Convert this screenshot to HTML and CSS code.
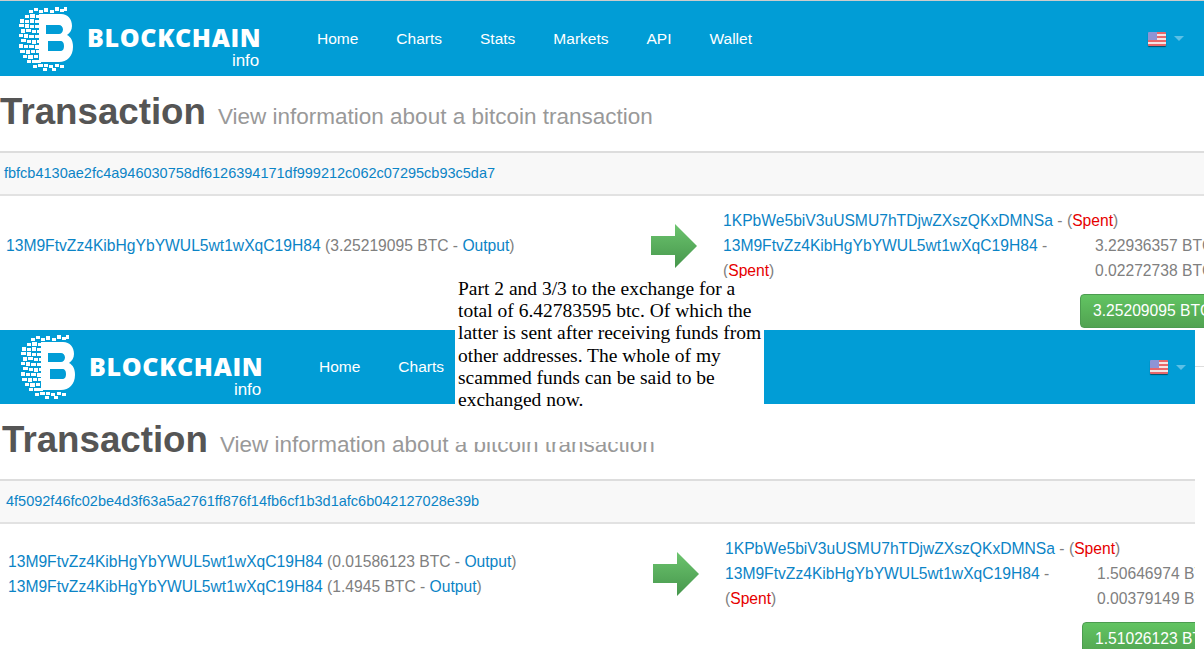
FILE: index.html
```html
<!DOCTYPE html>
<html lang="en">
  <head>
    <meta charset="UTF-8" />
    <title>Transaction</title>
    <link rel="stylesheet" href="styles.css">
  </head>
  <body>
    <svg class="defs" width="0" height="0">
      <defs>
        <g id="logoB" fill="#fff">
          <path fill-rule="evenodd" d="M20 7h22c7 0 11 5 11 12 0 4-2 7-5 9 4 2 6 6 6 12 0 9-6 15-14 15H20zM27 18v9h13c2 0 4-2 4-4.500s-2-4.500-4-4.500zM29 34v10h12c3 0 4-2 4-5s-1-5-4-5z" />
          <path d="M10 3h4v3h-4zM15 1h4v3h-4zM20 3h4v3h-4zM25 1h4v4h-4zM31 3h4v3h-4zM36 0h4v4h-4zM41 2h4v3h-4zM45 0h3v4h-3zM6 8h4v3H6zM11 7h5v4h-5zM17 8h4v3h-4zM1 12h4v4H1zM6 13h4v3H6zM11 12h4v4h-4zM16 13h5v3h-5zM0 17h5v3H0zM6 17h4v4H6zM11 18h4v3h-4zM16 18h5v3h-5zM2 22h4v4H2zM7 22h5v3H7zM13 23h4v3h-4zM18 23h3v3h-3zM0 27h4v3H0zM5 27h4v4H5zM10 28h5v3h-5zM16 28h5v3h-5zM2 32h5v3H2zM8 33h4v3H8zM13 33h4v4h-4zM18 33h3v3h-3zM0 37h4v4H0zM5 38h4v3H5zM10 38h5v3h-5zM16 38h5v4h-5zM1 43h5v3H1zM7 43h4v4H7zM12 43h4v3h-4zM17 43h4v3h-4zM4 48h4v3H4zM9 48h5v4H9zM15 48h4v3h-4zM8 53h4v3H8zM13 53h5v3h-5zM18 53h4v3h-4zM14 58h4v3h-4zM19 57h5v3h-5zM25 57h4v3h-4zM30 58h4v3h-4zM36 57h4v3h-4zM41 58h4v3h-4zM24 61h4v3h-4zM33 61h4v3h-4z" />
        </g>
        <linearGradient id="arrowFill" x1="0" y1="0" x2="0" y2="1">
          <stop offset="0" stop-color="#6cc46e" />
          <stop offset="1" stop-color="#46964c" />
        </linearGradient>
      </defs>
    </svg>

    <section class="shot">
      <nav class="navbar">
        <a class="brand">
          <svg class="brand-mark" width="54" height="64" viewBox="0 0 54 64"><use href="#logoB" /></svg>
          <span class="brand-text"><b>BLOCKCHAIN</b><small>info</small></span>
        </a>
        <ul class="nav-links">
          <li>Home</li>
          <li>Charts</li>
          <li>Stats</li>
          <li>Markets</li>
          <li>API</li>
          <li>Wallet</li>
        </ul>
        <div class="locale">
          <span class="flag"></span>
          <span class="caret"></span>
        </div>
      </nav>
      <div class="page-header">
        <h1>Transaction</h1>
        <span class="lead">View information about a bitcoin transaction</span>
      </div>
      <div class="tx-hash"><a>fbfcb4130ae2fc4a946030758df6126394171df999212c062c07295cb93c5da7</a></div>
      <div class="tx-row">
        <div class="tx-in">
          <p><a>13M9FtvZz4KibHgYbYWUL5wt1wXqC19H84</a> (3.25219095 BTC - <a>Output</a>)</p>
        </div>
        <svg class="arrow" width="46" height="44" viewBox="0 0 46 44"><path d="M0 12h24V0l22 22-22 22V31H0z" fill="url(#arrowFill)" /></svg>
        <div class="tx-out">
          <p><a>1KPbWe5biV3uUSMU7hTDjwZXszQKxDMNSa</a> - (<em>Spent</em>)</p>
          <p><a>13M9FtvZz4KibHgYbYWUL5wt1wXqC19H84</a> -<br>(<em>Spent</em>)</p>
        </div>
        <div class="tx-amounts">
          <p>3.22936357 BTC</p>
          <p>0.02272738 BTC</p>
        </div>
      </div>
      <div class="tx-total"><button>3.25209095 BTC</button></div>
    </section>

    <section class="shot shot-second">
      <nav class="navbar">
        <a class="brand">
          <svg class="brand-mark" width="54" height="64" viewBox="0 0 54 64"><use href="#logoB" /></svg>
          <span class="brand-text"><b>BLOCKCHAIN</b><small>info</small></span>
        </a>
        <ul class="nav-links">
          <li>Home</li>
          <li>Charts</li>
        </ul>
        <div class="locale">
          <span class="flag"></span>
          <span class="caret"></span>
        </div>
      </nav>
      <div class="page-header">
        <h1>Transaction</h1>
        <span class="lead">View information about a bitcoin transaction</span>
      </div>
      <div class="tx-hash"><a>4f5092f46fc02be4d3f63a5a2761ff876f14fb6cf1b3d1afc6b042127028e39b</a></div>
      <div class="tx-row">
        <div class="tx-in">
          <p><a>13M9FtvZz4KibHgYbYWUL5wt1wXqC19H84</a> (0.01586123 BTC - <a>Output</a>)</p>
          <p><a>13M9FtvZz4KibHgYbYWUL5wt1wXqC19H84</a> (1.4945 BTC - <a>Output</a>)</p>
        </div>
        <svg class="arrow" width="46" height="44" viewBox="0 0 46 44"><path d="M0 12h24V0l22 22-22 22V31H0z" fill="url(#arrowFill)" /></svg>
        <div class="tx-out">
          <p><a>1KPbWe5biV3uUSMU7hTDjwZXszQKxDMNSa</a> - (<em>Spent</em>)</p>
          <p><a>13M9FtvZz4KibHgYbYWUL5wt1wXqC19H84</a> -<br>(<em>Spent</em>)</p>
        </div>
        <div class="tx-amounts">
          <p>1.50646974 BTC</p>
          <p>0.00379149 BTC</p>
        </div>
      </div>
      <div class="tx-total"><button>1.51026123 BTC</button></div>
    </section>

    <div class="note">Part 2 and 3/3 to the exchange for a total of 6.42783595 btc. Of which the latter is sent after receiving funds from other addresses. The whole of my scammed funds can be said to be exchanged now.</div>
    <div class="stray-line"></div>
  </body>
</html>
```

FILE: styles.css
```css
html,
body {
  margin: 0;
  height: 649px;
  overflow: hidden;
  background: #fff;
}

body {
  position: relative;
  font-family: "Liberation Sans", Arial, sans-serif;
  font-size: 15.65px;
  color: #808080;
}

.defs {
  position: absolute;
}

p {
  margin: 0;
}

a {
  color: #0b84c6;
}

.shot {
  --nudge: 0px;
  height: 330px;
  overflow: hidden;
  box-sizing: border-box;
  border-top: 1px solid #ccc;
}

/* second capture sits 2px to the right and stops short of the window edge */
.shot-second {
  --nudge: 2px;
  height: 319px;
  width: 1195px;
  border-top: 0;
}

.navbar {
  display: flex;
  align-items: center;
  height: 75px;
  background: #019dd6;
  color: #fff;
}

.shot-second .navbar {
  height: 74px;
}

.brand {
  display: flex;
  align-items: center;
  flex: none;
  width: calc(297px + var(--nudge));
  padding-left: calc(19px + var(--nudge));
  box-sizing: border-box;
  color: #fff;
}

.brand-text {
  display: flex;
  flex-direction: column;
  align-items: flex-end;
  margin-left: 14px;
  margin-top: 17px;
}

.brand-text b {
  font-family: "Open Sans", "Liberation Sans", sans-serif;
  font-weight: 800;
  font-size: 25px;
  line-height: 25px;
  letter-spacing: 0.65px;
}

.brand-text small {
  margin: 2px 2px 0 0;
  font-size: 17px;
  line-height: 17px;
}

.nav-links {
  display: flex;
  gap: 38px;
  margin: 0;
  padding: 0 0 0 20px;
  list-style: none;
  font-size: 15.5px;
}

.locale {
  display: flex;
  align-items: center;
  gap: 8px;
  margin-left: auto;
  margin-right: 20px;
}

.shot-second .locale {
  margin-right: 9px;
}

.flag {
  width: 18px;
  height: 14px;
  border-radius: 1px;
  background: linear-gradient(#8f94d4 0 8px, transparent 8px),
    repeating-linear-gradient(#e8676a 0 2px, #f3e4e4 2px 4px);
  background-size: 9px 100%, 100% 100%;
  background-repeat: no-repeat;
  box-shadow: 0 1px 1px rgba(0, 0, 0, 0.5);
}

.caret {
  width: 0;
  height: 0;
  border-left: 5px solid transparent;
  border-right: 5px solid transparent;
  border-top: 5px solid #5cc0e6;
}

.page-header {
  display: flex;
  align-items: baseline;
  height: 77px;
  box-sizing: border-box;
  padding: 14px 0 0 var(--nudge);
  border-bottom: 2px solid #ddd;
  white-space: nowrap;
}

.page-header h1 {
  margin: 0 12px 0 0;
  font-size: 36.7px;
  line-height: 44px;
  font-weight: 700;
  color: #555;
}

.lead {
  font-size: 22.5px;
  color: #999;
}

.tx-hash {
  height: 43px;
  padding-left: calc(4px + var(--nudge));
  box-sizing: border-box;
  line-height: 41px;
  font-size: 14.5px;
  background: #f8f8f8;
  border-bottom: 2px solid #e2e2e2;
}

.tx-row {
  display: flex;
  align-items: center;
  height: 75px;
  padding: 12px 0 0 var(--nudge);
  white-space: nowrap;
}

.tx-in {
  flex: none;
  width: 651px;
  padding-left: 6px;
  box-sizing: border-box;
  line-height: 25px;
}

.arrow {
  flex: none;
}

.tx-out {
  flex: none;
  width: 372px;
  margin-left: 26px;
  line-height: 25px;
}

.tx-amounts {
  flex: none;
  align-self: flex-end;
  line-height: 25px;
}

em {
  font-style: normal;
  color: #e60000;
}

.tx-total {
  padding: 11px 0 0 calc(1080px + var(--nudge));
}

.tx-total button {
  height: 34px;
  width: 140px;
  padding: 0 0 0 12px;
  border: 1px solid #4c9c50;
  border-radius: 4px;
  text-align: left;
  font: 15.65px "Liberation Sans", Arial, sans-serif;
  color: #fff;
  white-space: nowrap;
  background: linear-gradient(#62c462, #51a351);
}

/* pasted caption, laid over the join of the two captures */
.note {
  position: absolute;
  left: 455px;
  top: 278px;
  width: 309px;
  height: 164px;
  padding-left: 3px;
  box-sizing: border-box;
  background: #fff;
  font-family: "Liberation Serif", "Times New Roman", serif;
  font-size: 19.5px;
  line-height: 22.2px;
  color: #000;
}

.stray-line {
  position: absolute;
  left: 1195px;
  top: 366px;
  width: 9px;
  height: 1px;
  background: #ddd;
}
```
